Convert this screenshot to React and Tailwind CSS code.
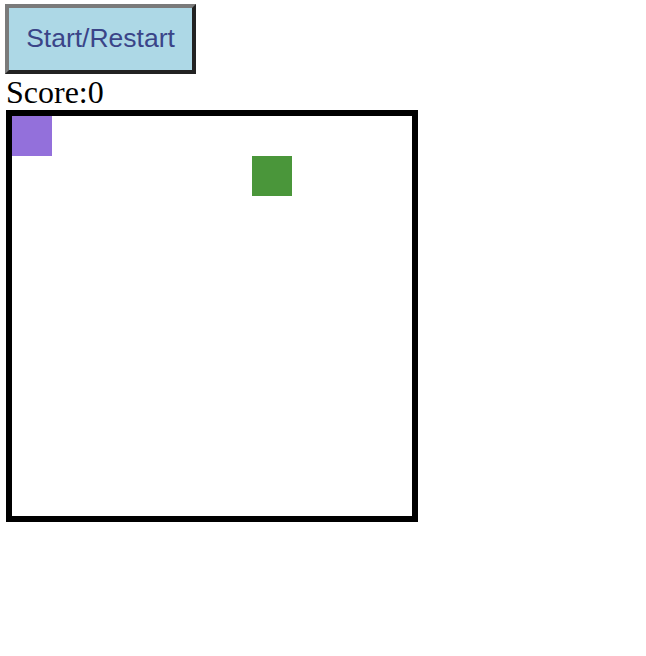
import React from "react";

export default function App() {
  return (
    <div className="flex flex-col items-start pl-[6px] pt-[4px] bg-white min-h-[656px]">
      <button
        className="w-[191px] h-[70px] -ml-[1px] bg-[#add8e6] text-[#3a4488] text-[26.5px] border-[4px] border-t-[#7a7a7a] border-l-[#7a7a7a] border-b-[#222222] border-r-[#222222] flex items-center justify-center"
        style={{ fontFamily: '"Liberation Sans", Arial, sans-serif' }}
      >
        Start/Restart
      </button>
      <div
        className="text-[32px] leading-[34px] text-black mt-[1px]"
        style={{ fontFamily: '"Liberation Serif", "Times New Roman", serif' }}
      >
        Score:0
      </div>
      <div className="mt-[1px] border-[6px] border-black w-[412px] h-[412px]">
        <div className="relative w-[400px] h-[400px]">
          <div className="absolute left-0 top-0 w-[40px] h-[40px] bg-[#9370db]" />
          <div className="absolute left-[240px] top-[40px] w-[40px] h-[40px] bg-[#4a963a]" />
        </div>
      </div>
    </div>
  );
}
